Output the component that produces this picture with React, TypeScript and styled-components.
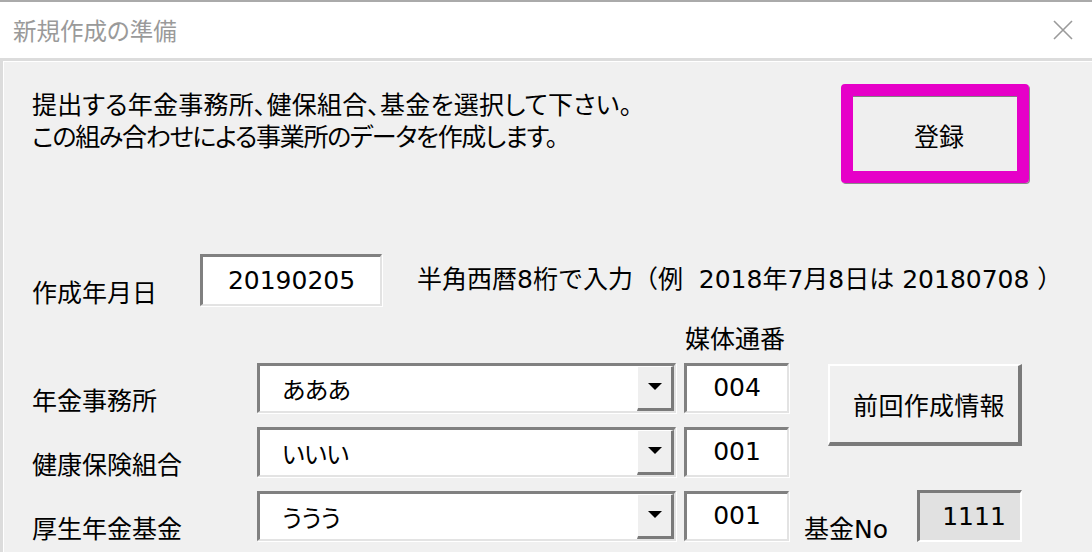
import React from 'react';
import styled, { createGlobalStyle, css } from 'styled-components';

const GlobalStyle = createGlobalStyle`
  html, body {
    margin: 0;
    padding: 0;
    background: #f0f0f0;
  }
  body {
    font-family: "DejaVu Sans", "Noto Sans CJK JP", sans-serif;
    font-feature-settings: "palt";
    color: #000;
  }
`;

const sunken = css`
  box-sizing: border-box;
  border-style: solid;
  border-width: 3px 2px 2px 3px;
  border-color: #808080 #e3e3e3 #e3e3e3 #808080;
  box-shadow: 1px 1px 0 #fff;
`;

const raised = css`
  box-sizing: border-box;
  border-style: solid;
  border-width: 2px 4px 4px 2px;
  border-color: #fff #7a7a7a #7a7a7a #fff;
`;

const Window = styled.div`
  width: 1092px;
  height: 552px;
  overflow: hidden;
  box-sizing: border-box;
  border-top: 2px solid #aaaaaa;
  background: #fff;
  display: flex;
  flex-direction: column;
`;

const TitleBar = styled.div`
  height: 56px;
  flex: none;
  border-bottom: 3px solid #dcdcdc;
  display: flex;
  align-items: center;
  justify-content: space-between;
  padding: 0 19px 0 13px;
`;

const Title = styled.span`
  font-family: "Noto Sans CJK JP", sans-serif;
  font-size: 23.5px;
  color: #9a9a9a;
`;

const CloseIcon = styled.svg`
  width: 20px;
  height: 20px;
  display: block;
`;

const Body = styled.div`
  flex: 1;
  background: #f0f0f0;
  border-left: 3px solid #dcdcdc;
  box-shadow: inset 1px 1px 0 #fff;
  padding-left: 29px;
  font-size: 25px;
`;

const TopRow = styled.div`
  display: flex;
  align-items: flex-start;
  padding-top: 23px;
`;

const Instructions = styled.p`
  margin: 6px 0 0;
  line-height: 32px;
`;

const Line = styled.span<{ $tight?: boolean }>`
  display: block;
  letter-spacing: ${p => (p.$tight ? '-1.3px' : '0.2px')};
`;

const Highlight = styled.div`
  margin-left: auto;
  margin-right: 63px;
  width: 188px;
  height: 99px;
  box-sizing: border-box;
  border: 12px solid #e600c8;
  border-radius: 4px;
  box-shadow: 1px 1px 0 #8a8a8a;
  display: flex;
`;

const RegisterButton = styled.button`
  flex: 1;
  margin: 0;
  padding: 2px 0 0 8px;
  border: none;
  border-top: 1px solid #808080;
  background: #efefef;
  font: inherit;
  color: #000;
`;

const DateRow = styled.div`
  margin-top: 71px;
  height: 52px;
  display: flex;
  align-items: flex-start;
`;

const DateLabel = styled.span`
  width: 168px;
  margin-top: 24px;
  line-height: 32px;
`;

const TextBox = styled.div<{ $width: number; $disabled?: boolean }>`
  ${sunken};
  width: ${p => p.$width}px;
  height: 52px;
  background: ${p => (p.$disabled ? '#e1e1e1' : '#fff')};
  display: flex;
  align-items: center;
  justify-content: center;
  padding-left: ${p => (p.$disabled ? 8 : 0)}px;
`;

const Hint = styled.span`
  margin: 10px 0 0 35px;
  line-height: 32px;
  white-space: pre;
  font-feature-settings: normal;
`;

const FormGrid = styled.div`
  margin-top: 11px;
  display: grid;
  grid-template-columns: 225px 427px 105px 233px;
  grid-template-rows: 32px repeat(3, 50px);
  row-gap: 14px;
`;

const MediaHeading = styled.span`
  grid-column: 3;
  grid-row: 1;
  align-self: end;
  margin-bottom: -7px;
  padding-left: 1px;
  line-height: 32px;
`;

const FieldLabel = styled.span<{ $row: number }>`
  grid-column: 1;
  grid-row: ${p => p.$row};
  padding-top: 23px;
  line-height: 32px;
`;

const Combo = styled.div<{ $row: number }>`
  ${sunken};
  grid-column: 2;
  grid-row: ${p => p.$row};
  width: 419px;
  height: 50px;
  background: #fff;
  display: flex;
`;

const ComboValue = styled.span`
  flex: 1;
  padding: 0 0 1px 22px;
  display: flex;
  align-items: center;
  font-size: 24px;
  letter-spacing: -0.5px;
`;

const DropButton = styled.span`
  box-sizing: border-box;
  width: 37px;
  height: 100%;
  background: #efefef;
  border-style: solid;
  border-width: 1px 3px 3px 1px;
  border-color: #fff #7a7a7a #7a7a7a #fff;
  display: flex;
  align-items: center;
  justify-content: center;
`;

const Arrow = styled.span`
  width: 0;
  height: 0;
  border-left: 7px solid transparent;
  border-right: 7px solid transparent;
  border-top: 7px solid #000;
  margin-top: -2px;
`;

const MediaBox = styled.div<{ $row: number }>`
  ${sunken};
  grid-column: 3;
  grid-row: ${p => p.$row};
  height: 50px;
  background: #fff;
  display: flex;
  align-items: center;
  justify-content: center;
  padding-bottom: 2px;
`;

const PrevButton = styled.button`
  ${raised};
  grid-column: 4;
  grid-row: 2 / 4;
  justify-self: end;
  align-self: start;
  margin: 1px 0 0;
  width: 194px;
  height: 82px;
  padding: 0 0 0 10px;
  background: #f0f0f0;
  font: inherit;
  letter-spacing: 0.3px;
  color: #000;
`;

const FundCell = styled.div`
  grid-column: 4;
  grid-row: 4;
  display: flex;
  align-items: flex-start;
`;

const FundLabel = styled.span`
  width: 128px;
  padding: 23px 0 0 15px;
  box-sizing: border-box;
  line-height: 32px;
  flex: none;
`;

const FundBox = styled(TextBox)`
  margin-top: -1px;
  border-color: #7a7a7a #fff #fff #7a7a7a;
  box-shadow: none;
`;

const fields = [
  { label: '年金事務所', value: 'あああ', no: '004' },
  { label: '健康保険組合', value: 'いいい', no: '001' },
  { label: '厚生年金基金', value: 'ううう', no: '001' },
];

export default function App() {
  return (
    <>
      <GlobalStyle />
      <Window>
        <TitleBar>
          <Title>新規作成の準備</Title>
          <CloseIcon viewBox="0 0 20 20">
            <path d="M1 1 L19 19 M19 1 L1 19" stroke="#9a9a9a" strokeWidth="1.6" fill="none" />
          </CloseIcon>
        </TitleBar>
        <Body>
          <TopRow>
            <Instructions>
              <Line>提出する年金事務所、健保組合、基金を選択して下さい。</Line>
              <Line $tight>この組み合わせによる事業所のデータを作成します。</Line>
            </Instructions>
            <Highlight>
              <RegisterButton>登録</RegisterButton>
            </Highlight>
          </TopRow>

          <DateRow>
            <DateLabel>作成年月日</DateLabel>
            <TextBox $width={182}>20190205</TextBox>
            <Hint>半角西暦8桁で入力（例  2018年7月8日は 20180708 ）</Hint>
          </DateRow>

          <FormGrid>
            <MediaHeading>媒体通番</MediaHeading>
            {fields.map((f, i) => (
              <React.Fragment key={f.label}>
                <FieldLabel $row={i + 2}>{f.label}</FieldLabel>
                <Combo $row={i + 2}>
                  <ComboValue>{f.value}</ComboValue>
                  <DropButton>
                    <Arrow />
                  </DropButton>
                </Combo>
                <MediaBox $row={i + 2}>{f.no}</MediaBox>
              </React.Fragment>
            ))}
            <PrevButton>前回作成情報</PrevButton>
            <FundCell>
              <FundLabel>基金No</FundLabel>
              <FundBox $width={105} $disabled>1111</FundBox>
            </FundCell>
          </FormGrid>
        </Body>
      </Window>
    </>
  );
}
